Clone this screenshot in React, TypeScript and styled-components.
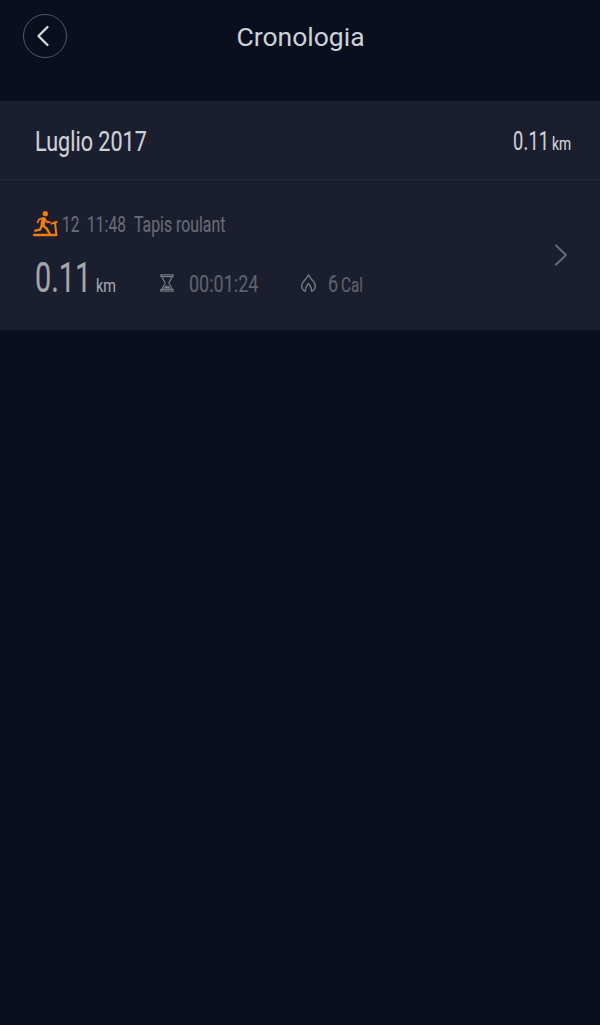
import React from 'react';
import styled, { createGlobalStyle } from 'styled-components';

const GlobalStyle = createGlobalStyle`
  * { box-sizing: border-box; }
  body { margin: 0; background: #090f1e; }
`;

const Screen = styled.main`
  min-height: 1025px;
  background: #090f1e;
  font-family: Roboto, 'Liberation Sans', sans-serif;
`;

const Header = styled.header`
  display: grid;
  grid-template-columns: 44px 1fr 44px;
  align-items: start;
  height: 101px;
  padding: 14px 22px 0 23px;
`;

const BackButton = styled.button`
  display: flex;
  align-items: center;
  justify-content: center;
  width: 44px;
  height: 44px;
  padding: 0;
  border: 1px solid #555864;
  border-radius: 50%;
  background: transparent;
`;

const Title = styled.h1`
  margin: 0;
  font-size: 26.5px;
  font-weight: 400;
  line-height: 46px;
  text-align: center;
  color: #cfd1d8;
`;

const Month = styled.section`
  background: #1a1e2e;
`;

const MonthHeader = styled.div`
  display: flex;
  align-items: flex-start;
  justify-content: space-between;
  height: 79px;
  padding: 21px 29px 0 35px;
  border-bottom: 1px solid #232837;
  line-height: 40px;
`;

const MonthTotal = styled.div`
  display: flex;
  align-items: baseline;
  margin-top: -1px;
`;

const Entry = styled.article`
  display: flex;
  justify-content: space-between;
  height: 150px;
  padding: 29px 32px 0 33px;
`;

const InfoLine = styled.div`
  display: flex;
  align-items: center;
  height: 30px;
`;

const Stats = styled.div`
  display: flex;
  align-items: baseline;
  height: 54px;
  margin-top: 12px;
  padding-left: 2px;
  line-height: 54px;
`;

const Slot = styled.span<{ $width: number }>`
  display: inline-block;
  flex: none;
  width: ${(p) => p.$width}px;
  white-space: nowrap;
`;

const Condensed = styled.span<{ $size: number; $scale: number; $color: string; $tracking: number }>`
  display: inline-block;
  font-size: ${(p) => p.$size}px;
  letter-spacing: ${(p) => p.$tracking}em;
  color: ${(p) => p.$color};
  -webkit-text-stroke: 0.15px ${(p) => p.$color};
  transform: scaleX(${(p) => p.$scale});
  transform-origin: left center;
`;

const Icon = styled.svg<{ $gap?: number }>`
  display: block;
  flex: none;
  margin-right: ${(p) => p.$gap ?? 0}px;
  overflow: visible;
  fill: none;
  stroke-linecap: round;
  stroke-linejoin: round;
`;

const Chevron = styled(Icon)`
  margin-top: 35px;
`;

type LabelProps = {
  width: number;
  size: number;
  scale: number;
  color: string;
  tracking?: number;
  children: string;
};

function Label({ width, size, scale, color, tracking = 0, children }: LabelProps) {
  return (
    <Slot $width={width}>
      <Condensed $size={size} $scale={scale} $color={color} $tracking={tracking}>{children}</Condensed>
    </Slot>
  );
}

const bright = '#cfd1d9';
const soft = '#a4a6ae';
const muted = '#696c78';
const dim = '#5f626e';

export default function App() {
  return (
    <Screen>
      <GlobalStyle />
      <Header>
        <BackButton aria-label="Indietro">
          <Icon width="12" height="20" viewBox="0 0 12 20" stroke="#d6dade" strokeWidth="2.3" $gap={4}>
            <path d="M10.500 1 1.500 10l9 9" />
          </Icon>
        </BackButton>
        <Title>Cronologia</Title>
      </Header>
      <Month>
        <MonthHeader>
          <Label width={120} size={28.5} scale={0.757} color={bright}>Luglio 2017</Label>
          <MonthTotal>
            <Label width={39} size={26} scale={0.7} color={bright} tracking={0.01}>0.11</Label>
            <Label width={19} size={17.5} scale={0.79} color={bright}>km</Label>
          </MonthTotal>
        </MonthHeader>
        <Entry>
          <div>
            <InfoLine>
              <Icon width="25" height="26" viewBox="24 32 75 78" stroke="#f47c0c" strokeWidth="7" $gap={4}>
                <circle cx="61" cy="40" r="8" fill="#f47c0c" stroke="none" />
                <path d="M27 104h67" />
                <path d="M94 103 90 66M79 70l16-5" strokeWidth="6" />
                <path d="M56 57 53 72" strokeWidth="13" />
                <path d="M54 53 42 57l-4 9M60 57l6 9 8-1" strokeWidth="5.5" />
                <path d="m54 75 11 10 10 17M50 77l-5 11-14 3" />
              </Icon>
              <Label width={25} size={22} scale={0.7} color={muted}>12</Label>
              <Label width={47} size={22} scale={0.7} color={muted} tracking={0.01}>11:48</Label>
              <Label width={92} size={22} scale={0.72} color={muted}>Tapis roulant</Label>
            </InfoLine>
            <Stats>
              <Label width={61} size={42.5} scale={0.68} color={soft}>0.11</Label>
              <Label width={64} size={19} scale={0.76} color={soft}>km</Label>
              <Icon width="14" height="18" viewBox="0 0 14 18" stroke="#777a85" strokeWidth="1.2" $gap={15}>
                <path d="M.8.8h12.400v1.800H.8zM.8 15.400h12.400v1.800H.8zM2.300 2.600C2.300 6 5 7 5 9s-2.700 3-2.700 6.400M11.700 2.600C11.700 6 9 7 9 9s2.700 3 2.700 6.400" />
                <path d="M4.300 14q2.700-4 5.400 0z" fill="#777a85" />
              </Icon>
              <Label width={112} size={24.5} scale={0.735} color={dim}>00:01:24</Label>
              <Icon width="15" height="18" viewBox="0 0 15 18" stroke="#777a85" strokeWidth="1.3" $gap={12}>
                <path d="M4.600 17.200H4C-.5 14.500 0 10.500 2.500 7.500 4.500 5 6.500 3.500 7.500.8c1 2.700 3 4.200 5 6.700 2.500 3 3 7-1.500 9.700h-.6c.8-3.200-.9-5-2.900-7.700-2 2.700-3.700 4.500-2.900 7.700z" />
              </Icon>
              <Label width={13} size={24} scale={0.75} color={dim}>6</Label>
              <Label width={22} size={20} scale={0.765} color={dim}>Cal</Label>
            </Stats>
          </div>
          <Chevron width="14" height="22" viewBox="0 0 14 22" stroke="#676a75" strokeWidth="2">
            <path d="m2 1.500 10 9.500-10 9.500" />
          </Chevron>
        </Entry>
      </Month>
    </Screen>
  );
}
